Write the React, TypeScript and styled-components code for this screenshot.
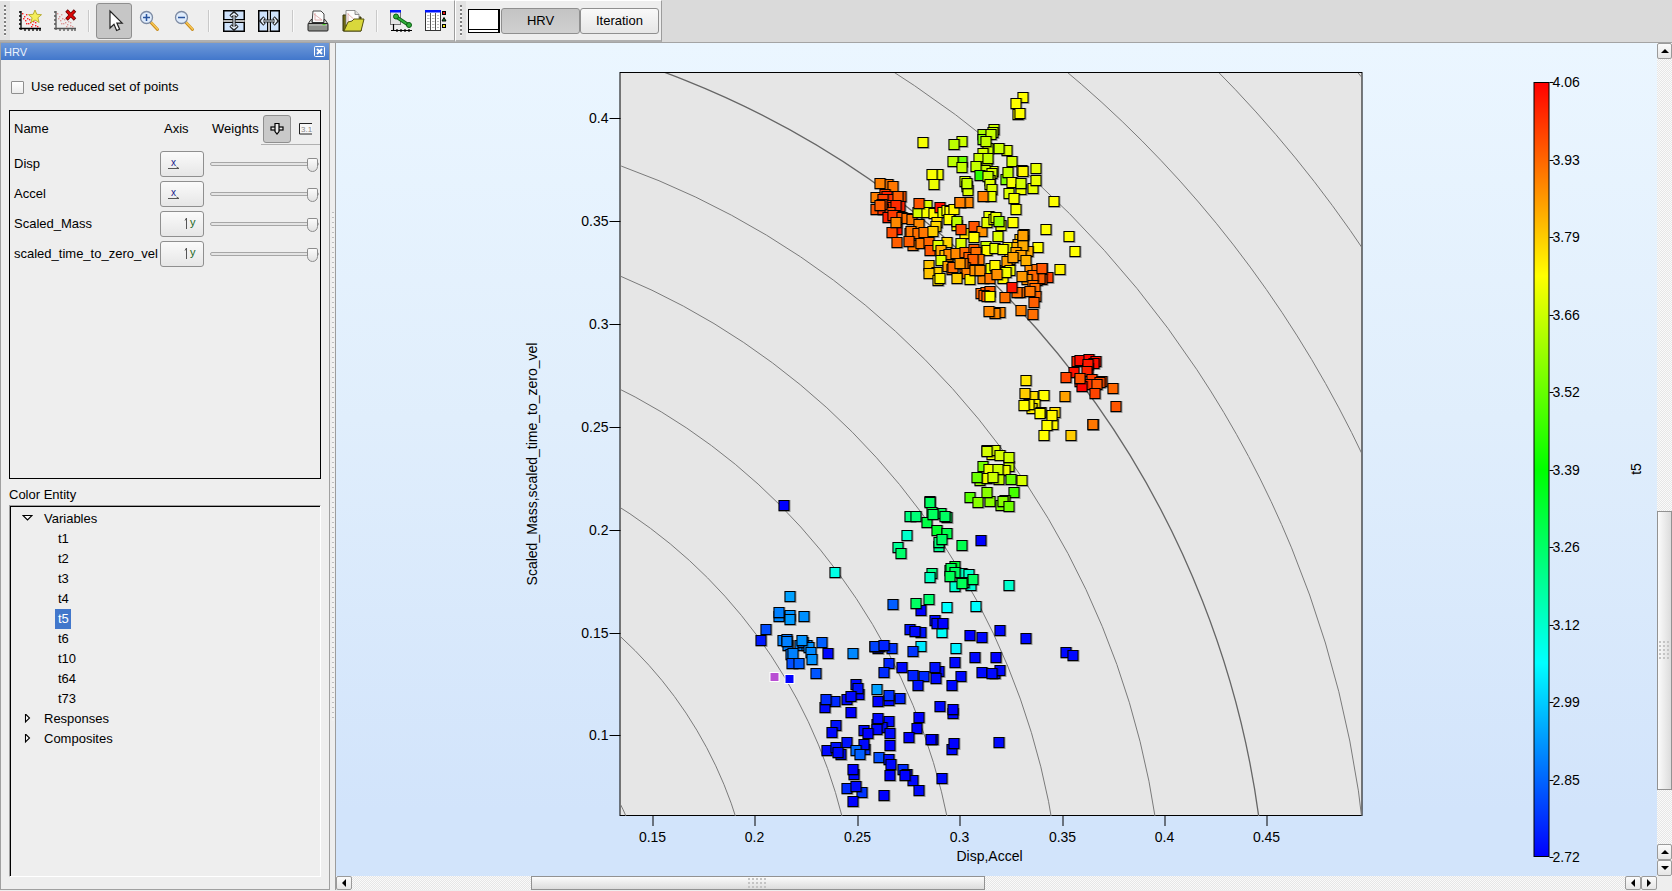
import React, { useState } from 'react';
import styled, { createGlobalStyle, css } from 'styled-components';

const GlobalStyle = createGlobalStyle`
  *, *::before, *::after { box-sizing: border-box; }
  body {
    margin: 0;
    background: #dadada;
    color: #000;
    font: 13px/20px "Liberation Sans", Arial, sans-serif;
  }
  button, input { font: inherit; color: inherit; margin: 0; padding: 0; }
`;

/* ---------- window frame ---------- */

const Window = styled.div`
  display: flex;
  flex-direction: column;
  min-height: 100vh;
`;

const ToolbarArea = styled.header`
  display: flex;
  height: 43px;
  background: #dadada;
  border-bottom: 1px solid #a4a4a4;
`;

const Toolbar = styled.div`
  display: flex;
  align-items: center;
  height: 42px;
  padding-right: 2px;
  background: #eeeeee;
  border-top: 1px solid #fff;
  border-right: 1px solid #9c9c9c;
  border-bottom: 2px solid #b0b0b0;

  & + & { border-left: 1px solid #fff; }
`;

const IconBar = styled(Toolbar)`
  padding-right: 0;
`;

const Handle = styled.div`
  flex: none;
  display: flex;
  justify-content: center;
  align-items: center;
  width: 10px;
  margin-right: 2px;
  height: 100%;
  background: #e2e2e2;

  &::before {
    content: '';
    width: 2px;
    height: 31px;
    background: repeating-linear-gradient(#7d7d7d 0 2px, #f4f4f4 2px 4px);
  }
`;

const ToolButton = styled.button<{ $active?: boolean }>`
  display: flex;
  align-items: center;
  justify-content: center;
  width: ${p => (p.$active ? 36 : 35)}px;
  height: 36px;
  border: 1px solid ${p => (p.$active ? '#8f8f8f' : 'transparent')};
  border-radius: 3px;
  background: ${p => (p.$active ? '#c6c6c6' : 'none')};
`;

const Separator = styled.div`
  width: 14px;
  height: 22px;
  display: flex;
  justify-content: center;

  &::before {
    content: '';
    width: 2px;
    background: #c9c9c9;
    border-right: 1px solid #fafafa;
  }
`;

const Swatch = styled.button`
  width: 32px;
  height: 24px;
  margin-right: 1px;
  background: #fff;
  border: 1px solid #000;
  border-right-width: 2px;
  box-shadow: inset 0 -2px #fff, inset 0 -3px #000;
`;

const ModeButton = styled.button<{ $pressed?: boolean }>`
  width: 79px;
  height: 26px;
  border: 1px solid #8f8f8f;
  border-radius: 3px;
  background: ${p => (p.$pressed ? 'linear-gradient(#c4c4c4, #d0d0d0)' : 'linear-gradient(#f9f9f9, #e6e6e6)')};
`;

const Body = styled.div`
  flex: 1;
  display: flex;
  min-height: 0;
  padding-bottom: 1px;
  background: #eeeeee;
`;

/* ---------- side panel ---------- */

const Panel = styled.aside`
  flex: none;
  display: flex;
  flex-direction: column;
  width: 330px;
  background: #eeeeee;
  border: solid #a0a0a0;
  border-width: 0 1px 1px 1px;
`;

const PanelTitle = styled.div`
  display: flex;
  align-items: center;
  justify-content: space-between;
  height: 17px;
  padding: 0 4px 0 3px;
  background: linear-gradient(#6e99d9, #4277cb);
  color: #eaf1fc;
  font-size: 11px;
`;

const CloseButton = styled.button`
  display: flex;
  border: 0;
  background: none;
`;

const PanelBody = styled.div`
  flex: 1;
  display: flex;
  flex-direction: column;
  padding: 17px 8px 12px 8px;
`;

const CheckLabel = styled.label`
  display: flex;
  align-items: center;
  gap: 7px;
  margin-bottom: 13px;
  padding-left: 2px;
`;

const CheckBox = styled.input`
  appearance: none;
  width: 13px;
  height: 13px;
  background: linear-gradient(#fff, #ececec);
  border: 1px solid #8f8f8f;
  border-radius: 1px;
  &:checked { background: #4277cb; }
`;

const WeightBox = styled.div`
  flex: 1 1 0;
  min-height: 171px;
  border: 1px solid #000;
`;

const WeightTable = styled.table`
  width: 100%;
  table-layout: fixed;
  border-collapse: collapse;
`;

const Th = styled.th<{ $width?: number }>`
  ${p => p.$width && css`width: ${p.$width}px;`}
  height: 38px;
  padding: 0 0 2px 4px;
  text-align: left;
  font-weight: normal;
`;

const WeightsTh = styled(Th)`
  padding: 0 0 2px 2px;
`;

const WeightsHead = styled.div`
  display: flex;
  align-items: center;
  white-space: nowrap;
`;

const ModeGroup = styled.div`
  flex: 1;
  display: flex;
  align-items: center;
  gap: 6px;
  height: 32px;
  margin-left: 2px;
  padding-left: 2px;
  overflow: hidden;
  border-bottom: 1px solid #b0b0b0;
`;

const SmallToggle = styled.button<{ $pressed?: boolean }>`
  flex: none;
  display: flex;
  align-items: center;
  justify-content: center;
  width: ${p => (p.$pressed ? 28 : 18)}px;
  height: 28px;
  border: ${p => (p.$pressed ? '1px solid #8f8f8f' : '0')};
  border-radius: 3px;
  background: ${p => (p.$pressed ? '#c9c9c9' : 'none')};
`;

const Td = styled.td`
  height: 30px;
  padding: 0 0 0 4px;
  white-space: nowrap;
`;

const ControlTd = styled(Td)`
  padding: 0;
  line-height: 0;
`;

const AxisButton = styled.button`
  width: 44px;
  height: 26px;
  border: 1px solid #8f8f8f;
  border-radius: 3px;
  background: linear-gradient(#fafafa, #e6e6e6);
`;

const Slider = styled.input`
  appearance: none;
  display: block;
  width: 109px;
  height: 16px;
  background: none;

  &::-webkit-slider-runnable-track {
    height: 4px;
    border: 1px solid #a6a6a6;
    border-radius: 2px;
    background: #e4e4e4;
  }
  &::-webkit-slider-thumb {
    appearance: none;
    width: 11px;
    height: 14px;
    margin-top: -5px;
    border: 1px solid #8c8c8c;
    border-radius: 2px 2px 6px 6px;
    background: linear-gradient(#fbfbfb, #e2e2e2);
  }
`;

const SectionLabel = styled.div`
  padding-top: 6px;
`;

const Tree = styled.ul`
  flex: 1 1 0;
  min-height: 250px;
  margin: 0;
  padding: 3px 0 0;
  list-style: none;
  border: 1px solid #a0a0a0;
  border-right-color: #fff;
  border-bottom-color: #fff;
  box-shadow: inset 1px 1px #000;
`;

const Children = styled.ul`
  margin: 0;
  padding: 0 0 0 45px;
  list-style: none;
`;

const Branch = styled.button`
  display: flex;
  align-items: center;
  height: 20px;
  padding-left: 12px;
  gap: 11px;
  border: 0;
  background: none;
`;

const Leaf = styled.button<{ $selected: boolean }>`
  display: block;
  height: 20px;
  padding: 0 2px 0 3px;
  border: 0;
  background: ${p => (p.$selected ? '#4277cb' : 'none')};
  color: ${p => (p.$selected ? '#fff' : '#000')};
`;

const Splitter = styled.div`
  flex: none;
  display: flex;
  justify-content: center;
  align-items: center;
  width: 6px;
  background: #eeeeee;
  border-right: 1px solid #9c9c9c;

  &::before {
    content: '';
    width: 2px;
    height: 60%;
    background: repeating-linear-gradient(#bdbdbd 0 1px, #f2f2f2 1px 5px);
  }
`;

/* ---------- plot area ---------- */

const PlotPane = styled.main`
  flex: 1;
  min-width: 0;
  display: grid;
  grid-template: minmax(0, 1fr) 14px / minmax(0, 1fr) 15px;
`;

const Canvas = styled.div`
  display: flex;
  min-height: 0;
  background: linear-gradient(#ebf6ff, #e0eefc 45%, #d2e4fb 92%);
`;

const Plot = styled.svg`
  flex: 1;
  min-width: 0;
  width: 100%;
  height: calc(100vh - 58px);
  font: 14px "Liberation Sans", Arial, sans-serif;
`;

const ScrollTrack = styled.div<{ $vertical?: boolean }>`
  display: flex;
  flex-direction: ${p => (p.$vertical ? 'column' : 'row')};
  background: repeating-conic-gradient(#e6e6e6 0 25%, #fafafa 0 50%) 0 0 / 2px 2px;
`;

const ScrollButton = styled.button<{ $vertical?: boolean }>`
  flex: none;
  display: flex;
  align-items: center;
  justify-content: center;
  width: ${p => (p.$vertical ? 15 : 16)}px;
  height: ${p => (p.$vertical ? 16 : 14)}px;
  border: 1px solid #9a9a9a;
  border-radius: 2px;
  background: linear-gradient(#fbfbfb, #e6e6e6);
`;

const ScrollSpace = styled.div<{ $grow: number }>`
  flex: ${p => p.$grow} 1 0;
`;

const ScrollThumb = styled.div<{ $grow: number; $vertical?: boolean }>`
  flex: ${p => p.$grow} 1 0;
  display: flex;
  align-items: center;
  justify-content: center;
  border: 1px solid #929292;
  background: linear-gradient(${p => (p.$vertical ? '90deg, ' : '')}#fbfbfb, #dcdcdc);

  &::before {
    content: '';
    width: ${p => (p.$vertical ? 11 : 19)}px;
    height: ${p => (p.$vertical ? 19 : 11)}px;
    background: radial-gradient(circle at 1px 1px, #c4c4c4 1px, transparent 1px) 0 0 / 4px 4px;
  }
`;

const Corner = styled.div`
  background: #eeeeee;
`;

/* ---------- icons ---------- */

const scatterDots: [number, number][] = [
  [4, 5], [6, 8], [8, 6], [9, 10], [7, 12], [11, 11], [12, 14], [10, 15], [14, 16],
  [15, 13], [17, 17], [13, 18], [19, 18], [5, 10], [8, 15], [17, 14],
];

const ScatterBase = ({ faded }: { faded?: boolean }) => (
  <>
    <path d="M3 2v19M1 3h2M1 7h2M1 11h2M1 15h2M1 19.5h22M7 19v3M11 19v3M15 19v3M19 19v3M22 19v3" stroke={faded ? '#555' : '#000'} strokeWidth="1.3" fill="none" />
    {scatterDots.map(([x, y]) => (
      <rect key={`${x}-${y}`} x={x} y={y - 1} width="1.4" height="1.4" fill={faded ? '#d99' : '#f22'} />
    ))}
  </>
);

const NewPlotIcon = () => (
  <svg width="24" height="24" viewBox="0 0 24 24">
    <ScatterBase />
    <path d="M17 1l1.800 4.300 4.700.4-3.600 3.100 1.200 4.700-4.100-2.500-4.100 2.500 1.200-4.700-3.600-3.100 4.700-.4z" fill="#f5ee5a" stroke="#b3a82a" strokeWidth=".9" />
  </svg>
);

const DeletePlotIcon = () => (
  <svg width="24" height="24" viewBox="0 0 24 24">
    <ScatterBase faded />
    <path d="M13.500 1.500l8.500 9M22 1.500l-8.500 9" stroke="#5c0000" strokeWidth="3.400" />
    <path d="M14 2l7.500 8M21.500 2l-7.500 8" stroke="#d90808" strokeWidth="2.200" />
  </svg>
);

const CursorIcon = () => (
  <svg width="24" height="24" viewBox="0 0 24 24">
    <path d="M8 2v17l4-3.800 2.600 6.300 3-1.300-2.700-6.100h5.300z" fill="#fff" stroke="#222" strokeWidth="1.200" />
  </svg>
);

const MagnifierIcon = ({ plus }: { plus?: boolean }) => (
  <svg width="22" height="22" viewBox="0 0 22 22">
    <path d="M12 12.500l6.500 7" stroke="#c78a1a" strokeWidth="3" strokeLinecap="round" />
    <path d="M12 12l6.500 7" stroke="#f6c452" strokeWidth="1.800" strokeLinecap="round" />
    <circle cx="7.500" cy="7.500" r="6" fill="#dfecfc" stroke="#7d8ba3" strokeWidth="1.300" />
    <path d={plus ? 'M4 7.500h7M7.500 4v7' : 'M4 7.500h7'} stroke="#2a559f" strokeWidth="1.500" />
  </svg>
);

const FitIcon = ({ sideways }: { sideways?: boolean }) => (
  <svg width="24" height="24" viewBox="0 0 24 24">
    <g transform={sideways ? 'rotate(90 12 12)' : undefined}>
      <rect x="1.750" y="1.750" width="20.500" height="9" fill="#cfe3fc" stroke="#000" strokeWidth="1.500" />
      <rect x="1.750" y="13.250" width="20.500" height="9" fill="#cfe3fc" stroke="#000" strokeWidth="1.500" />
      <path d="M2 11.500h20v1H2z" fill="#fff" />
      <path d="M12 4.500v15M8.500 7.500L12 4l3.500 3.500M8.500 16.500L12 20l3.500-3.500" fill="none" stroke="#222" strokeWidth="3.200" />
      <path d="M12 5v14M9 7L12 4.500l3 2.500M9 17l3 2.500 3-2.500" fill="none" stroke="#e8f1fc" strokeWidth="1.200" />
    </g>
  </svg>
);

const PrinterIcon = () => (
  <svg width="24" height="24" viewBox="0 0 24 24">
    <path d="M7 2h8l3 3v9H6z" fill="#fbfbfb" stroke="#444" />
    <path d="M8 5l8 6M9 4v7h7" stroke="#dba0a0" strokeWidth=".8" fill="none" />
    <path d="M5 10.500h1v3h12v-3h1l3 4.500H2z" fill="#d7d9d5" stroke="#333" />
    <rect x="2" y="14.500" width="20" height="7.500" rx="1" fill="#8e908c" stroke="#222" />
    <path d="M3 16h18" stroke="#c9cbc7" />
    <rect x="16.500" y="15" width="3" height="1.200" fill="#4fd12a" />
  </svg>
);

const FolderIcon = () => (
  <svg width="24" height="24" viewBox="0 0 24 24">
    <path d="M2 6h5l2 2h11v14H2z" fill="#6f6a16" stroke="#33300a" />
    <path d="M5 1.500h9l4 4V16H5z" fill="#fdfdfd" stroke="#777" strokeWidth=".8" />
    <path d="M14 1.500v4h4" fill="#ddd" stroke="#777" strokeWidth=".8" />
    <path d="M7 5l9 8M7 4v9h9" stroke="#dba0a0" strokeWidth=".8" fill="none" />
    <path d="M7 13l4-1 2-2h10l-3 12H3z" fill="#d9d83c" stroke="#55520f" />
  </svg>
);

const LinkIcon = () => (
  <svg width="24" height="24" viewBox="0 0 24 24">
    <rect x=".5" y="2.500" width="10" height="13" fill="#e4e4e4" stroke="#777" />
    <rect x="0" y="1" width="11" height="2.500" fill="#0014ff" />
    <path d="M3.500 15v7M1 21.500h21M7 20v3M11 20v3M15 20v3M19 20v3" stroke="#000" strokeWidth="1.200" />
    <path d="M6.500 8l12 8" stroke="#0c5c14" strokeWidth="3.400" />
    <path d="M6.500 8l12 8" stroke="#2fae3a" strokeWidth="2" />
    <circle cx="6" cy="7.500" r="2.500" fill="#2fae3a" stroke="#0c5c14" />
    <circle cx="19" cy="16" r="2.500" fill="#2fae3a" stroke="#0c5c14" />
  </svg>
);

const TableIcon = () => (
  <svg width="24" height="24" viewBox="0 0 24 24">
    <rect x=".5" y="2.500" width="15" height="19" fill="#fff" stroke="#333" />
    <rect x="0" y="1" width="16" height="2.500" fill="#0014ff" />
    <path d="M5.500 4v17M10.500 4v17" stroke="#555" />
    <path d="M2 6.500h12M2 9.500h12M2 12.500h12M2 15.500h12M2 18.500h12" stroke="#bbb" strokeWidth="1.200" strokeDasharray="2.500 2.500" />
    <rect x="17.500" y="2.500" width="3" height="3" fill="#e21a1a" stroke="#000" />
    <path d="M19 8.500l2 3.500h-4z" fill="#178a2a" stroke="#000" />
    <rect x="17.500" y="15.500" width="3" height="3" fill="#f2e51c" stroke="#000" />
  </svg>
);

const CloseIcon = () => (
  <svg width="11" height="11" viewBox="0 0 11 11">
    <rect x=".5" y=".5" width="10" height="10" rx="1" fill="none" stroke="#fff" />
    <path d="M3 3l5 5M8 3l-5 5" stroke="#fff" strokeWidth="1.800" />
  </svg>
);

const SliderModeIcon = () => (
  <svg width="14" height="14" viewBox="0 0 14 14" fill="#e8e8e8" stroke="#000" strokeWidth="1.200">
    <rect x="1" y="5" width="12" height="3" />
    <path d="M5 1.500h4v8l-2 2.500-2-2.500z" />
  </svg>
);

const NumberModeIcon = () => (
  <svg width="16" height="14" viewBox="0 0 16 14">
    <path d="M14 1.500H1.500v10.500H14" fill="#f7f7f7" stroke="#222" />
    <text x="3" y="10" fontSize="8" fill="#888">3.1</text>
  </svg>
);

const AxisIcon = ({ axis }: { axis: 'x' | 'y' }) => (
  <svg width="42" height="24" viewBox="0 0 42 24">
    {axis === 'x' ? (
      <>
        <text x="10" y="14" fontSize="10" fill="#1a1a8c">x</text>
        <path d="M7 16.500h11M15.500 15l2.500 1.500" stroke="#555" fill="none" />
      </>
    ) : (
      <>
        <path d="M25.500 17V6M24 8.500L25.500 6" stroke="#555" fill="none" />
        <text x="29" y="14" fontSize="11" fill="#1a661a">y</text>
      </>
    )}
  </svg>
);

const Twisty = ({ open }: { open: boolean }) => (
  <svg width="11" height="10" viewBox="0 0 11 10">
    <path d={open ? 'M1 1.500h9L5.500 6z' : 'M3.500 0v8L7.500 4z'} fill="#fff" stroke="#000" strokeWidth="1.100" />
  </svg>
);

const arrowPaths = { up: 'M0 6l4-4 4 4z', down: 'M0 2l4 4 4-4z', left: 'M6 0L2 4l4 4z', right: 'M2 0l4 4-4 4z' };

const Arrow = ({ to }: { to: keyof typeof arrowPaths }) => (
  <svg width="8" height="8" viewBox="0 0 8 8"><path d={arrowPaths[to]} /></svg>
);

/* ---------- plot data ---------- */

// Each group lists its markers as "x y hue", in thirds of a plot unit from the group's corner.
const groups: { x: number; y: number; points: string }[] = [
  {
    x: 850,
    y: 80,
    points: `518 55 60,504 106 60,498 74 60,509 102 60,219 191 62,335 187 72,313 195 76,433 152 73,428 160 74,398 167 80,
      400 180 90,422 166 74,471 214 68,448 207 73,413 207 72,400 222 70,386 238 72,409 188 74,410 262 72,413 238 74,487 247 70,
      335 248 95,309 247 76,336 266 74,428 278 70,405 275 72,379 263 74,426 284 70,391 290 110,420 305 66,413 292 74,
      265 286 63,247 285 61,252 317 64,345 307 70,350 322 70,355 335 68,352 312 73,421 316 68,425 330 68,424 353 66,400 351 30,
      468 300 90,475 279 74,515 275 58,520 277 58,485 310 62,513 330 64,512 312 70,557 269 66,550 327 66,557 303 65,478 344 68,
      492 358 62,497 390 62,613 367 60,
      77 355 30,108 318 28,115 316 28,90 314 30,130 321 28,105 345 15,110 352 8,120 360 12,100 362 15,77 392 20,153 353 20,
      110 380 12,130 385 15,100 390 12,145 352 22,150 382 8,138 380 10,120 400 18,95 375 20,90 379 22,115 415 8,130 410 14,
      155 415 20,172 417 26,186 420 28,140 450 5,126 459 18,137 431 32,208 437 32,180 462 24,183 456 28,205 462 26,223 460 28,
      141 489 22,188 500 28,178 486 22,214 492 28,238 490 24,241 514 20,
      230 379 68,205 401 70,232 401 62,258 400 60,252 403 58,271 386 3,278 400 65,290 395 60,300 397 60,312 391 58,262 430 52,
      258 443 50,249 458 48,208 374 20,290 490 50,263 500 68,298 420 60,321 440 60,321 428 75,329 370 30,354 370 32,329 370 30,
      344 463 55,334 450 18,372 441 20,396 456 34,372 475 60,332 492 68,418 412 66,412 430 66,432 422 65,437 415 66,452 440 65,
      447 427 85,489 431 60,444 471 68,588 452 60,656 472 60,674 516 60,565 505 60,629 570 57,
      408 503 72,410 515 60,435 509 66,473 505 62,460 512 62,510 480 45,505 495 42,523 467 38,520 485 38,500 505 42,535 517 40,
      520 500 40,497 520 38,512 530 38,480 540 40,472 548 38,488 536 38,527 543 42,520 470 38,
      272 515 40,285 530 45,295 545 35,296 525 32,272 545 68,317 524 32,238 558 46,262 580 50,236 583 46,265 603 52,270 598 58,
      295 562 38,305 570 25,310 565 25,345 520 25,372 510 22,358 535 22,377 520 26,387 542 28,369 541 22,345 565 28,340 552 28,
      329 554 36,350 582 30,320 598 48,361 602 56,400 598 32,375 575 34,390 575 34,424 567 64,437 574 20,420 597 28,435 560 58,
      460 598 58,480 575 62,468 580 62,440 585 34,540 575 34,575 568 20,594 595 15,560 572 26,575 600 20,560 605 22,
      570 597 22,550 590 24,530 600 34,515 591 36,575 568 20,548 620 26,555 628 26,510 640 26,500 640 26,486 625 5,558 651 24,
      540 636 28,466 654 26,551 669 22,392 643 24,407 640 20,420 637 22,402 648 22,410 653 22,420 652 60,451 701 32,435 703 32,
      417 697 32,513 695 30,548 706 26`,
  },
  {
    x: 940,
    y: 330,
    points: `258 153 54,278 203 52,255 193 48,313 199 60,284 225 58,275 238 56,267 227 58,251 230 60,344 250 52,303 250 50,
      300 254 60,340 287 58,337 258 58,322 288 60,313 320 60,376 203 38,393 318 48,460 285 28,458 286 28,
      412 98 8,419 93 3,448 92 2,469 97 4,462 103 3,444 118 0,443 105 6,403 130 4,440 128 8,379 146 16,420 158 12,455 150 15,
      450 165 12,426 172 1,421 147 20,486 158 18,480 160 18,470 165 20,519 178 24,466 192 16,529 231 20,
      140 363 66,157 375 66,164 364 68,142 366 70,181 380 70,208 412 74,208 386 72,130 412 92,195 425 64,148 422 65,
      120 453 84,178 450 74,174 422 72,140 447 64,112 444 95,159 445 72,214 450 95,246 453 70,90 505 100,221 490 104,
      151 517 88,141 491 88,113 520 88,183 530 92,196 515 85,188 517 88,207 532 94`,
  },
  {
    x: 900,
    y: 480,
    points: `89 66 143,91 71 143,30 112 150,47 112 148,122 104 140,142 115 142,95 100 135,81 130 136,135 112 143,98 106 142,
      110 155 130,141 163 138,116 203 155,117 190 148,126 182 143,186 198 138,21 170 168,-5 206 155,3 223 145,242 183 240,
      97 282 150,91 295 165,165 262 130,185 283 165,208 285 168,150 275 138,154 267 140,165 280 142,212 320 170,193 310 138,
      166 322 168,151 291 140,218 300 143,187 312 140,328 319 168,140 385 180,228 381 180,64 393 240,86 361 146,47 372 143,
      126 460 178,104 423 238,112 434 238,128 434 240,29 452 236,62 460 236,45 457 238,63 502 185,39 516 228,168 507 183,
      211 470 240,247 475 238,301 454 238,378 477 238,498 519 238,519 530 238,166 551 238,225 535 238,289 534 240,
      5 566 238,118 578 238,104 566 236,71 592 230,38 590 232,107 599 238,184 593 238,157 619 238,55 620 236,245 581 238,
      285 583 236,301 574 238,276 583 238,0 657 232,120 681 238,158 702 238,160 690 240,57 715 240,51 747 240,26 774 240,
      100 780 238,92 780 240,157 810 238,162 793 240,298 790 238,125 898 238,9 872 230,20 885 238,39 904 238,15 889 240,
      57 935 238`,
  },
  {
    x: 740,
    y: 480,
    points: `132 79 240,284 281 174,149 351 202,118 413 208,150 408 206,118 400 210,150 420 204,193 413 206,79 451 222,
      64 483 234,128 485 210,145 498 210,180 500 210,141 482 212,200 498 210,190 490 214,152 525 212,208 505 206,212 520 208,
      216 540 206,160 523 210,187 484 206,142 487 210,246 489 218,265 523 238,338 524 208,227 584 220,157 553 222,
      178 552 218,458 375 218,455 508 228,415 507 234,404 502 226,420 503 228,405 501 224,431 500 232,447 553 232,431 580 230,
      410 631 202,349 617 238,358 645 238,355 628 236,322 660 238,334 652 238,285 668 230,256 684 238,259 661 230,
      334 700 240,446 663 238,448 650 228,415 667 240,289 739 236,277 759 238,448 727 238,411 735 236,427 745 238,
      412 751 238,414 719 238,373 754 238,384 763 240,450 763 238,449 799 240,375 810 228,320 789 236,373 795 238,
      262 813 238,287 806 236,304 825 238,295 820 238,349 815 215,359 826 218,416 835 222,448 840 236,452 856 238,
      450 889 240,342 885 238,340 870 240,320 928 230,365 940 228,348 922 238,340 967 240,433 949 240`,
  },
];

const markers = groups.flatMap(group =>
  group.points.split(',').map(entry => {
    const [px, py, hue] = entry.trim().split(/\s+/).map(Number);
    return { x: group.x + Math.round(px / 3) - 5, y: group.y + Math.floor(py / 3) - 5, hue };
  }),
);

const xTicks = ['0.15', '0.2', '0.25', '0.3', '0.35', '0.4', '0.45'];
const yTicks = ['0.4', '0.35', '0.3', '0.25', '0.2', '0.15', '0.1'];
const scaleTicks = ['4.06', '3.93', '3.79', '3.66', '3.52', '3.39', '3.26', '3.12', '2.99', '2.85', '2.72'];
const rings = Array.from({ length: 11 }, (_, i) => i + 3);

const ScatterPlot = () => (
  <Plot viewBox="336 43 1320 833" role="img" aria-label="HRV scatter plot">
    <defs>
      <clipPath id="frame"><rect x="620" y="73" width="741" height="743" /></clipPath>
      <linearGradient id="scale" x1="0" y1="0" x2="0" y2="1">
        <stop offset="0" stopColor="#f00" />
        <stop offset=".25" stopColor="#ff0" />
        <stop offset=".5" stopColor="#0f0" />
        <stop offset=".75" stopColor="#0ff" />
        <stop offset="1" stopColor="#00f" />
      </linearGradient>
    </defs>

    <rect x="619.500" y="72.500" width="742" height="743" fill="#e6e6e6" stroke="#000" />
    <g clipPath="url(#frame)" fill="none" stroke="#7a7a7a">
      {rings.map(k => (
        <ellipse key={k} cx="345" cy="942" rx={k * 102.4} ry={k * 103} stroke={k === 9 ? '#666' : undefined} strokeWidth={k === 9 ? 1.3 : 1} />
      ))}
    </g>

    {yTicks.map((label, i) => {
      const y = Math.round(118 + i * 102.9);
      return (
        <g key={label}>
          <path d={`M609 ${y + 0.5}h11`} stroke="#000" />
          <text x="608" y={y + 5} textAnchor="end">{label}</text>
        </g>
      );
    })}
    {xTicks.map((label, i) => {
      const x = Math.round(652 + i * 102.4);
      return (
        <g key={label}>
          <path d={`M${x + 0.5} 816v10`} stroke="#000" />
          <text x={x} y="842" textAnchor="middle">{label}</text>
        </g>
      );
    })}
    <text x="989" y="861" textAnchor="middle">Disp,Accel</text>
    <text transform="translate(536 464) rotate(-90)" textAnchor="middle">Scaled_Mass,scaled_time_to_zero_vel</text>

    {markers.map((m, i) => (
      <g key={i}>
        <rect x={m.x - 1} y={m.y - 1} width="12" height="12" fill="#000" opacity=".35" />
        <rect x={m.x - 0.5} y={m.y - 0.5} width="10" height="10" fill={`hsl(${m.hue} 100% 50%)`} stroke="#000" />
      </g>
    ))}
    <rect x="769.500" y="672.500" width="9" height="9" fill="#b94fd3" stroke="#fff" />
    <rect x="784.500" y="674.500" width="9" height="9" fill="#00f" stroke="#fff" />

    <rect x="1533.500" y="82.500" width="15" height="774" fill="url(#scale)" stroke="#000" />
    {scaleTicks.map((label, i) => {
      const y = Math.round(82 + i * 77.5);
      return (
        <g key={label}>
          <path d={`M1549 ${y + 0.5}h4`} stroke="#000" />
          <text x="1552" y={y + 5}>{label}</text>
        </g>
      );
    })}
    <text transform="translate(1640 469) rotate(-90)" textAnchor="middle">t5</text>
  </Plot>
);

/* ---------- application ---------- */

const weights: { name: string; axis: 'x' | 'y' }[] = [
  { name: 'Disp', axis: 'x' },
  { name: 'Accel', axis: 'x' },
  { name: 'Scaled_Mass', axis: 'y' },
  { name: 'scaled_time_to_zero_vel', axis: 'y' },
];

const variables = ['t1', 't2', 't3', 't4', 't5', 't6', 't10', 't64', 't73'];

export default function App() {
  const [selected, setSelected] = useState('t5');
  const [open, setOpen] = useState(true);

  return (
    <Window>
      <GlobalStyle />
      <ToolbarArea>
        <IconBar role="toolbar">
          <Handle />
          <ToolButton aria-label="New plot"><NewPlotIcon /></ToolButton>
          <ToolButton aria-label="Delete plot"><DeletePlotIcon /></ToolButton>
          <Separator />
          <ToolButton aria-label="Select" $active><CursorIcon /></ToolButton>
          <ToolButton aria-label="Zoom in"><MagnifierIcon plus /></ToolButton>
          <ToolButton aria-label="Zoom out"><MagnifierIcon /></ToolButton>
          <Separator />
          <ToolButton aria-label="Fit height"><FitIcon /></ToolButton>
          <ToolButton aria-label="Fit width"><FitIcon sideways /></ToolButton>
          <Separator />
          <ToolButton aria-label="Print"><PrinterIcon /></ToolButton>
          <ToolButton aria-label="Open"><FolderIcon /></ToolButton>
          <Separator />
          <ToolButton aria-label="Link plots"><LinkIcon /></ToolButton>
          <ToolButton aria-label="Legend table"><TableIcon /></ToolButton>
        </IconBar>
        <Toolbar role="toolbar">
          <Handle />
          <Swatch aria-label="Background colour" />
          <ModeButton $pressed>HRV</ModeButton>
          <ModeButton>Iteration</ModeButton>
        </Toolbar>
      </ToolbarArea>

      <Body>
        <Panel>
          <PanelTitle>
            HRV
            <CloseButton aria-label="Close panel"><CloseIcon /></CloseButton>
          </PanelTitle>
          <PanelBody>
            <CheckLabel>
              <CheckBox type="checkbox" />
              Use reduced set of points
            </CheckLabel>
            <WeightBox>
              <WeightTable>
                <thead>
                  <tr>
                    <Th $width={150}>Name</Th>
                    <Th $width={50}>Axis</Th>
                    <WeightsTh>
                      <WeightsHead>
                        Weights
                        <ModeGroup>
                          <SmallToggle $pressed aria-label="Edit with sliders"><SliderModeIcon /></SmallToggle>
                          <SmallToggle aria-label="Edit as numbers"><NumberModeIcon /></SmallToggle>
                        </ModeGroup>
                      </WeightsHead>
                    </WeightsTh>
                  </tr>
                </thead>
                <tbody>
                  {weights.map(w => (
                    <tr key={w.name}>
                      <Td>{w.name}</Td>
                      <ControlTd>
                        <AxisButton aria-label={`${w.name} axis`}><AxisIcon axis={w.axis} /></AxisButton>
                      </ControlTd>
                      <ControlTd>
                        <Slider type="range" defaultValue={100} aria-label={`${w.name} weight`} />
                      </ControlTd>
                    </tr>
                  ))}
                </tbody>
              </WeightTable>
            </WeightBox>
            <SectionLabel>Color Entity</SectionLabel>
            <Tree>
              <li>
                <Branch aria-expanded={open} onClick={() => setOpen(!open)}><Twisty open={open} />Variables</Branch>
                {open && (
                  <Children>
                    {variables.map(v => (
                      <li key={v}>
                        <Leaf $selected={v === selected} onClick={() => setSelected(v)}>{v}</Leaf>
                      </li>
                    ))}
                  </Children>
                )}
              </li>
              <li><Branch aria-expanded={false}><Twisty open={false} />Responses</Branch></li>
              <li><Branch aria-expanded={false}><Twisty open={false} />Composites</Branch></li>
            </Tree>
          </PanelBody>
        </Panel>
        <Splitter />
        <PlotPane>
          <Canvas><ScatterPlot /></Canvas>
          <ScrollTrack $vertical>
            <ScrollButton $vertical aria-label="Scroll up"><Arrow to="up" /></ScrollButton>
            <ScrollSpace $grow={454} />
            <ScrollThumb $grow={278} $vertical />
            <ScrollSpace $grow={54} />
            <ScrollButton $vertical aria-label="Page up"><Arrow to="up" /></ScrollButton>
            <ScrollButton $vertical aria-label="Scroll down"><Arrow to="down" /></ScrollButton>
          </ScrollTrack>
          <ScrollTrack>
            <ScrollButton aria-label="Scroll left"><Arrow to="left" /></ScrollButton>
            <ScrollSpace $grow={179} />
            <ScrollThumb $grow={453} />
            <ScrollSpace $grow={641} />
            <ScrollButton aria-label="Page left"><Arrow to="left" /></ScrollButton>
            <ScrollButton aria-label="Scroll right"><Arrow to="right" /></ScrollButton>
          </ScrollTrack>
          <Corner />
        </PlotPane>
      </Body>
    </Window>
  );
}
